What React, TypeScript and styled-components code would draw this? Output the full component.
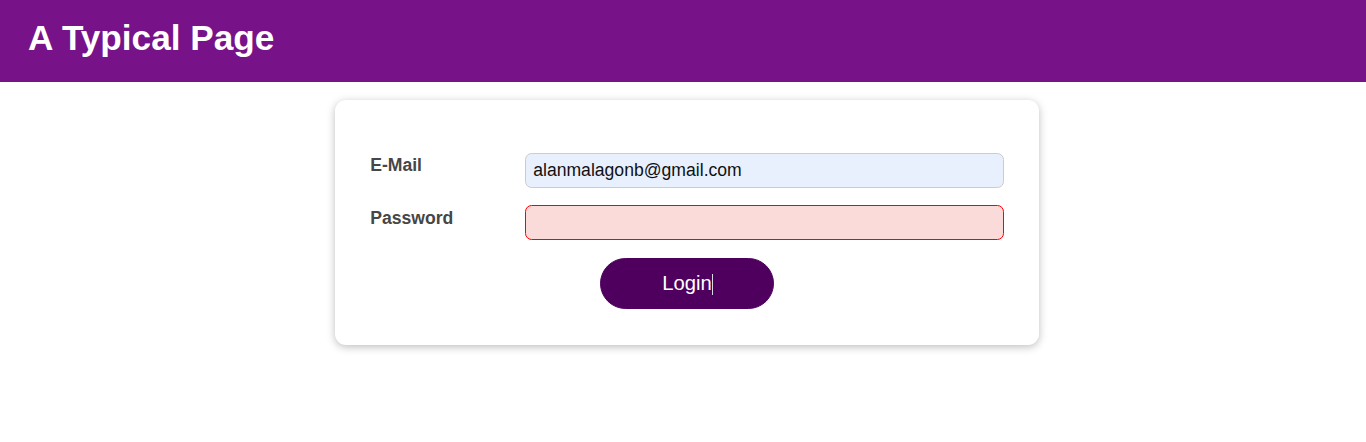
import React from "react";
import styled, { createGlobalStyle } from "styled-components";

const GlobalStyle = createGlobalStyle`
  * { box-sizing: border-box; }
  html, body { margin: 0; padding: 0; background: #ffffff; }
  body { font-family: "Liberation Sans", Arial, sans-serif; font-size: 17.6px; }
`;

const Header = styled.header`
  width: 100%;
  height: 82px;
  display: flex;
  align-items: center;
  background: #771289;
  padding: 0 28px 6px 28px;
`;

const Title = styled.h1`
  margin: 0;
  color: #ffffff;
  font-size: 35.2px;
  font-weight: bold;
`;

const Main = styled.main`
  padding: 18px 0 40px 8px;
`;

const Card = styled.div`
  width: 704px;
  margin: 0 auto;
  background: #ffffff;
  border-radius: 11px;
  box-shadow: 0 2px 8px rgba(0, 0, 0, 0.26);
  padding: 35.2px;
`;

const Control = styled.div`
  display: flex;
  align-items: center;
  margin: 17.6px 0;
`;

const Label = styled.label`
  width: 155px;
  flex: none;
  font-weight: bold;
  color: #464646;
  margin-bottom: 8.8px;
  line-height: normal;
`;

const Input = styled.input<{ $invalid?: boolean; $filled?: boolean }>`
  flex: 1;
  min-width: 0;
  height: 35px;
  font: inherit;
  color: #111111;
  padding: 0 7px;
  border-radius: 6.6px;
  border: 1px solid ${(p) => (p.$invalid ? "#ff0000" : "#cccccc")};
  background: ${(p) => (p.$invalid ? "#fbdada" : p.$filled ? "#e8f0fe" : "#ffffff")};
  outline: none;
`;

const Actions = styled.div`
  text-align: center;
`;

const Button = styled.button`
  font-family: inherit;
  font-size: 20.24px;
  border: 1px solid #4f005f;
  background: #4f005f;
  color: #ffffff;
  padding: 13.2px 61px;
  border-radius: 33px;
  cursor: pointer;
  line-height: normal;
`;

const Caret = styled.span`
  display: inline-block;
  width: 1px;
  height: 21px;
  background: #d8d8e8;
  vertical-align: -5px;
  margin-left: 0;
  margin-right: -1px;
`;

export default function App() {
  return (
    <>
      <GlobalStyle />
      <Header>
        <Title>A Typical Page</Title>
      </Header>
      <Main>
        <Card>
          <form onSubmit={(e) => e.preventDefault()}>
            <Control>
              <Label htmlFor="email">E-Mail</Label>
              <Input id="email" type="email" $filled defaultValue="alanmalagonb@gmail.com" />
            </Control>
            <Control>
              <Label htmlFor="password">Password</Label>
              <Input id="password" type="password" $invalid defaultValue="" />
            </Control>
            <Actions>
              <Button type="submit">
                Login<Caret />
              </Button>
            </Actions>
          </form>
        </Card>
      </Main>
    </>
  );
}
